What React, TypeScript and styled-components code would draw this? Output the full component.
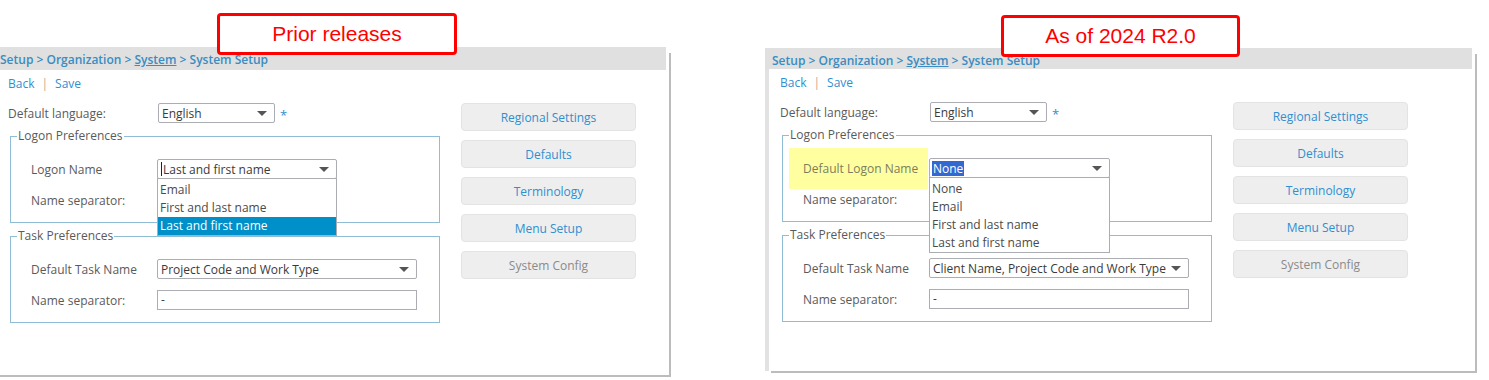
import React from "react";
import styled, {createGlobalStyle} from "styled-components";

const GlobalStyle = createGlobalStyle`
  html, body {
    margin: 0;
    background: #ffffff;
  }

  body {
    font-family: "Open Sans", "DejaVu Sans", sans-serif;
    font-size: 12px;
    color: #555555;
    overflow: hidden;
  }
`;

const Page = styled.div`
  display: flex;
  align-items: flex-start;
  width: 1489px;
  height: 380px;
  overflow: hidden;
`;

const Panel = styled.section<{$top: number; $left: number; $width: number; $height: number}>`
  position: relative;
  flex: none;
  display: flex;
  flex-direction: column;
  box-sizing: border-box;
  margin-top: ${(p) => p.$top}px;
  margin-left: ${(p) => p.$left}px;
  width: ${(p) => p.$width}px;
  height: ${(p) => p.$height}px;
  background: #ffffff;
  box-shadow: 4px 4px 0 -2px #bcbcbc;
`;

const Callout = styled.div<{$left: number; $top: number; $width: number}>`
  position: absolute;
  z-index: 2;
  left: ${(p) => p.$left}px;
  top: ${(p) => p.$top}px;
  width: ${(p) => p.$width}px;
  height: 42px;
  box-sizing: border-box;
  border: 3px solid #ff0000;
  border-radius: 4px;
  background: #ffffff;
  display: flex;
  align-items: center;
  justify-content: center;
  font-family: "Liberation Sans", Arial, sans-serif;
  font-size: 21px;
  color: #ff0000;
`;

const Header = styled.div<{$height: number}>`
  flex: none;
  height: ${(p) => p.$height}px;
  margin-right: 3px;
  box-sizing: border-box;
  padding: 5px 0 0 7px;
  background: #e0e0e0;
  line-height: 16px;
  font-weight: 600;
  color: #3a8cc1;
  white-space: nowrap;
`;

const Crumb = styled.span<{$underline?: boolean}>`
  text-decoration: ${(p) => (p.$underline ? "underline" : "none")};
`;

const Body = styled.div`
  flex: 1;
  border-left: 4px solid #e2e2e2;
  padding: 6px 0 0 11px;
`;

const LinkBar = styled.div`
  display: flex;
  align-items: center;
  gap: 7px;
  height: 16px;
  line-height: 16px;
`;

const Link = styled.span`
  color: #2f8fd0;
`;

const Divider = styled.span`
  color: #c4a98c;
`;

const Columns = styled.div`
  display: flex;
  align-items: flex-start;
  gap: 21px;
  margin-top: 11px;
`;

const Form = styled.div`
  display: flex;
  flex-direction: column;
  width: 432px;
`;

const LangRow = styled.div`
  display: flex;
  align-items: center;
  height: 20px;
`;

const Label = styled.span<{$width: number; $highlight?: boolean}>`
  flex: none;
  width: ${(p) => p.$width}px;
  color: #5a5a5a;
  white-space: nowrap;
  ${(p) =>
    p.$highlight &&
    `
    align-self: stretch;
    display: flex;
    align-items: center;
    margin: -10px 1px -11px -14px;
    padding: 0 0 0 14px;
    width: ${p.$width - 1}px;
    height: 41px;
    background: #ffffa0;
    color: #7d7d5c;
  `}
`;

const Required = styled.span`
  margin: 4px 0 0 5px;
  color: #2f8fd0;
  font-size: 13px;
`;

const Group = styled.fieldset`
  margin: 5px 0 0 2px;
  width: 430px;
  box-sizing: border-box;
  border: 1px solid #8fbdd6;
  padding: 15px 0 12px 20px;
  display: flex;
  flex-direction: column;
  gap: 11px;
`;

const Legend = styled.legend`
  margin-left: -14px;
  padding: 0 1px;
  line-height: 16px;
  color: #5a5a5a;
`;

const FieldRow = styled.div`
  display: flex;
  align-items: center;
  height: 20px;
`;

const Select = styled.div<{$width: number}>`
  position: relative;
  flex: none;
  display: flex;
  align-items: center;
  width: ${(p) => p.$width}px;
  height: 20px;
  box-sizing: border-box;
  border: 1px solid #abadb3;
  border-radius: 2px;
  padding-left: 3px;
  background: #ffffff;
  color: #3a3a3a;
  white-space: nowrap;
`;

const Arrow = styled.span`
  flex: none;
  margin-left: auto;
  margin-right: 7px;
  width: 0;
  height: 0;
  border-left: 5px solid transparent;
  border-right: 5px solid transparent;
  border-top: 5px solid #555555;
`;

const Caret = styled.span`
  width: 1px;
  height: 14px;
  margin-right: 1px;
  background: #222222;
`;

const Picked = styled.span`
  padding: 0 1px;
  margin-left: -1px;
  line-height: 15px;
  background: #3367d1;
  color: #ffffff;
`;

const Input = styled.div<{$width: number}>`
  flex: none;
  width: ${(p) => p.$width}px;
  height: 20px;
  box-sizing: border-box;
  border: 1px solid #abadb3;
  padding-left: 3px;
  line-height: 18px;
  color: #3a3a3a;
`;

const Options = styled.ul`
  position: absolute;
  z-index: 1;
  top: 100%;
  left: -1px;
  right: -1px;
  margin: 0;
  padding: 2px 0 0;
  list-style: none;
  border: 1px solid #abadb3;
  background: #ffffff;
`;

const Option = styled.li<{$active?: boolean}>`
  height: 18px;
  line-height: 18px;
  padding-left: 2px;
  background: ${(p) => (p.$active ? "#0090c9" : "#ffffff")};
  color: ${(p) => (p.$active ? "#ffffff" : "#4a4a4a")};
`;

const Buttons = styled.div`
  display: flex;
  flex-direction: column;
  gap: 9px;
  width: 175px;
`;

const Button = styled.div<{$disabled?: boolean}>`
  height: 28px;
  box-sizing: border-box;
  border: 1px solid #e3e3e3;
  border-radius: 4px;
  background: #eeeeee;
  display: flex;
  align-items: center;
  justify-content: center;
  color: ${(p) => (p.$disabled ? "#8a8a8a" : "#2f8fd0")};
`;

type Variant = {
  top: number;
  left: number;
  width: number;
  height: number;
  headerHeight: number;
  callout: string;
  calloutLeft: number;
  calloutTop: number;
  calloutWidth: number;
  newer: boolean;
};

const menu = ["Regional Settings", "Defaults", "Terminology", "Menu Setup"];

const SetupPanel: React.FC<{v: Variant}> = ({v}) => {
  const logonOptions = v.newer
    ? ["None", "Email", "First and last name", "Last and first name"]
    : ["Email", "First and last name", "Last and first name"];

  return (
    <Panel $top={v.top} $left={v.left} $width={v.width} $height={v.height}>
      <Callout $left={v.calloutLeft} $top={v.calloutTop} $width={v.calloutWidth}>
        {v.callout}
      </Callout>
      <Header $height={v.headerHeight}>
        Setup &gt; Organization &gt; <Crumb $underline>System</Crumb> &gt; System Setup
      </Header>
      <Body>
        <LinkBar>
          <Link>Back</Link>
          <Divider>|</Divider>
          <Link>Save</Link>
        </LinkBar>
        <Columns>
          <Form>
            <LangRow>
              <Label $width={150}>Default language:</Label>
              <Select $width={117}>
                English
                <Arrow />
              </Select>
              <Required>*</Required>
            </LangRow>

            <Group>
              <Legend>Logon Preferences</Legend>
              <FieldRow>
                <Label $width={126} $highlight={v.newer}>
                  {v.newer ? "Default Logon Name" : "Logon Name"}
                </Label>
                <Select $width={v.newer ? 181 : 180}>
                  {v.newer ? (
                    <Picked>None</Picked>
                  ) : (
                    <>
                      <Caret />
                      Last and first name
                    </>
                  )}
                  <Arrow />
                  <Options>
                    {logonOptions.map((o) => (
                      <Option key={o} $active={!v.newer && o === "Last and first name"}>
                        {o}
                      </Option>
                    ))}
                  </Options>
                </Select>
              </FieldRow>
              <FieldRow>
                <Label $width={126}>Name separator:</Label>
                {/* value hidden under the open list */}
                <Input $width={180} />
              </FieldRow>
            </Group>

            <Group>
              <Legend>Task Preferences</Legend>
              <FieldRow>
                <Label $width={126}>Default Task Name</Label>
                <Select $width={260}>
                  {v.newer ? "Client Name, Project Code and Work Type" : "Project Code and Work Type"}
                  <Arrow />
                </Select>
              </FieldRow>
              <FieldRow>
                <Label $width={126}>Name separator:</Label>
                <Input $width={260}>-</Input>
              </FieldRow>
            </Group>
          </Form>

          <Buttons>
            {menu.map((m) => (
              <Button key={m}>{m}</Button>
            ))}
            <Button $disabled>System Config</Button>
          </Buttons>
        </Columns>
      </Body>
    </Panel>
  );
};

const prior: Variant = {
  top: 47,
  left: -7,
  width: 676,
  height: 328,
  headerHeight: 23,
  callout: "Prior releases",
  calloutLeft: 224,
  calloutTop: -34,
  calloutWidth: 240,
  newer: false,
};

const current: Variant = {
  top: 48,
  left: 96,
  width: 710,
  height: 323,
  headerHeight: 21,
  callout: "As of 2024 R2.0",
  calloutLeft: 236,
  calloutTop: -33,
  calloutWidth: 239,
  newer: true,
};

const App: React.FC = () => {
  return (
    <>
      <GlobalStyle />
      <Page>
        <SetupPanel v={prior} />
        <SetupPanel v={current} />
      </Page>
    </>
  );
};

export default App;
